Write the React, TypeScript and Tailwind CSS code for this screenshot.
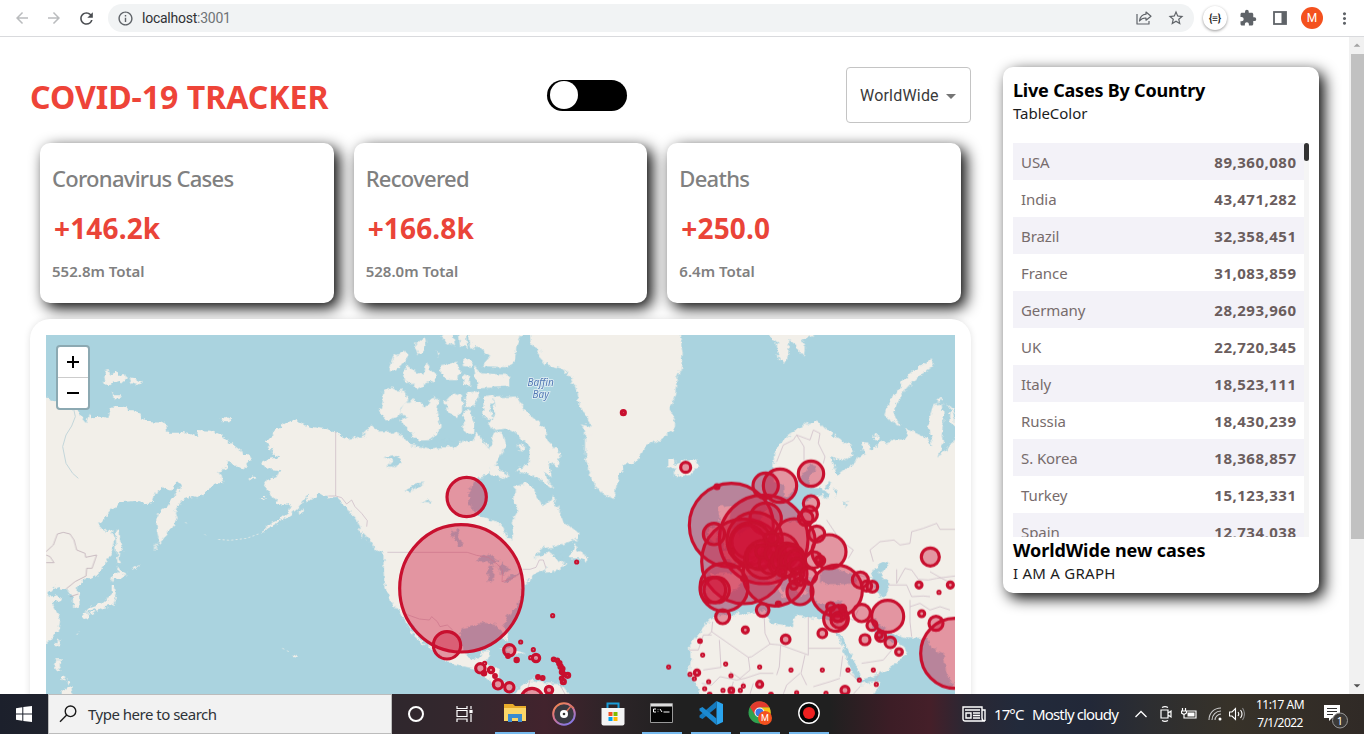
import React from "react";
import {
  MdArrowBack,
  MdArrowForward,
  MdRefresh,
  MdInfoOutline,
  MdStarBorder,
  MdExtension,
  MdMoreVert,
  MdArrowDropDown,
  MdArrowDropUp,
} from "react-icons/md";

const countries: [string, string][] = [
  ["USA", "89,360,080"],
  ["India", "43,471,282"],
  ["Brazil", "32,358,451"],
  ["France", "31,083,859"],
  ["Germany", "28,293,960"],
  ["UK", "22,720,345"],
  ["Italy", "18,523,111"],
  ["Russia", "18,430,239"],
  ["S. Korea", "18,368,857"],
  ["Turkey", "15,123,331"],
  ["Spain", "12,734,038"],
];

const stats = [
  { title: "Coronavirus Cases", value: "+146.2k", total: "552.8m Total" },
  { title: "Recovered", value: "+166.8k", total: "528.0m Total" },
  { title: "Deaths", value: "+250.0", total: "6.4m Total" },
];

const pacificLand = [
  "20,232 62,234 64,242 80,240 130,268 145,272 155,295 168,310 178,280 182,292 215,290 235,294 242,265 262,258 290,262 292,270 325,272 330,288 345,303 400,305 412,318 414,338 450,338 480,342 500,352 503,330 545,332 575,345 610,375 630,390 635,402 655,402 668,420 650,432 645,452 628,440 605,428 592,420 590,440 575,452 560,455 575,465 580,490 560,490 530,512 505,532 490,528 460,537 442,560 435,580 440,598 428,622 412,640 398,660 388,670 382,640 378,600 385,580 410,562 425,542 440,522 455,490 440,492 420,512 405,503 385,510 370,545 345,550 325,542 265,547 240,575 205,615 222,632 235,628 248,635 253,655 245,695 225,735 200,765 180,775 165,774 158,790 140,803 150,830 152,858 130,865 128,832 115,815 108,803 95,807 88,797 70,810 55,820 60,830 80,826 95,838 65,850 75,868 85,885 90,905 85,930 60,962 20,980",
  "220,175 226,152 238,150 245,165 258,152 268,165 280,162 287,178 275,188 262,180 240,196 225,192",
  "298,172 318,175 335,187 325,195 305,190",
  "246,214 252,214 250,226 266,226 273,240 252,238",
  "573,298 590,290 605,298 598,307 580,307",
  "262,630 269,628 270,660 279,695 268,697 266,714 273,730 262,728 260,690 257,645",
  "262,738 275,755 290,765 270,778 250,775 245,785 243,780 248,765 262,760",
  "245,795 257,798 260,820 250,855 225,860 205,872 190,868 168,880 176,865 205,855 215,852 235,835 245,815",
  "156,880 172,877 173,893 162,898",
  "180,876 196,872 192,880 180,884",
  "78,965 90,956 86,975 77,983",
  "76,1018 92,1018 93,1040 86,1050 95,1060 80,1052 72,1040",
  "95,1112 108,1108 124,1098 129,1140 95,1140",
  "95,1065 106,1070 102,1082 94,1076",
  "110,1078 120,1084 112,1096",
  "785,298 810,308 840,320 890,328 915,340 965,360 965,575 945,555 920,530 885,530 865,518 848,535 828,548 836,520 815,545 808,562 780,585 740,610 722,620 690,640 722,610 745,600 775,575 785,555 768,557 742,550 728,530 705,498 712,480 740,470 748,450 720,448 690,430 710,418 752,410 730,402 722,385 703,362 726,350 735,330 750,320",
  "806,575 820,562 822,570 810,584",
  "692,532 706,530 706,537",
  "655,470 678,474 676,480 660,476",
  "280,766 300,752 285,762",
  "300,750 335,733 318,746",
  "370,690 380,672 385,670 376,686",
  "787,1004 794,1001 800,1010 793,1014",
];

const americaLand = [
  "-5,332 20,340 55,358 90,348 108,330 130,320 150,338 190,335 215,345 240,375 285,380 315,372 340,382 385,380 400,360 425,368 440,340 465,372 480,385 495,335 518,340 525,380 510,405 498,430 480,445 475,462 450,470 430,490 415,520 415,555 435,575 465,592 520,615 525,640 545,665 550,640 545,605 565,570 552,550 555,500 585,490 610,503 620,530 640,558 655,545 668,530 685,568 700,605 745,638 745,655 720,665 680,678 640,685 610,712 635,708 660,690 676,695 670,715 690,728 705,725 690,745 660,757 645,758 650,745 625,755 600,775 580,800 575,830 555,865 530,890 522,915 537,945 533,966 520,945 510,930 498,912 460,908 430,916 392,925 388,960 400,990 420,1018 450,1015 455,995 478,992 475,1015 465,1028 480,1035 508,1046 506,1078 530,1090 555,1086 556,1105 530,1112 505,1103 480,1082 455,1062 430,1045 370,1034 330,1010 300,982 265,938 238,900 245,930 270,955 287,978 275,970 250,945 228,905 200,866 180,840 162,790 160,700 132,680 115,655 90,628 80,600 60,578 45,548 20,530 -5,532",
  "540,1150 570,1098 605,1078 640,1090 690,1092 740,1150",
  "600,10 605,75 630,90 625,108 645,130 690,145 722,170 740,210 750,260 772,290 782,320 765,330 765,400 775,450 790,490 815,520 850,538 862,490 880,438 920,425 950,375 990,360 1035,325 1035,300 1020,270 1035,225 1040,180 1052,150 1058,100 1045,10",
  "160,210 185,203 200,212 222,208 235,240 215,262 205,285 180,300 165,300 150,275 158,245",
  "208,280 225,250 250,238 285,262 300,240 315,228 326,245 320,275 332,320 318,345 298,360 270,362 250,350 235,330 210,300 235,292",
  "175,150 190,110 225,95 235,110 220,130 200,152",
  "218,160 230,140 255,155 280,165 290,125 300,150 318,160 315,180 290,190 262,205 245,190 222,180",
  "255,75 285,50 288,70 280,95 265,102",
  "318,90 328,108 322,112",
  "330,135 365,130 380,125 388,150 385,180 350,180 335,165",
  "400,118 425,125 420,140 402,138",
  "335,55 350,10 365,20 375,78 355,70",
  "385,10 405,10 412,80 390,78",
  "415,10 590,10 560,75 555,120 540,142 455,138 480,110 450,85 420,80",
  "432,135 455,160 540,165 540,200 445,205 438,180",
  "400,165 420,172 420,198 400,192",
  "345,245 370,218 396,225 396,270 380,295 355,275",
  "405,220 448,218 440,245 425,262 405,260",
  "402,272 418,270 435,310 432,340 400,335",
  "460,230 495,222 480,265 488,300 460,290",
  "490,232 560,230 578,262 605,290 645,325 650,355 692,400 685,440 655,425 665,470 640,455 668,505 635,480 600,465 555,450 595,435 600,380 565,345 530,325 500,330 470,315 495,290",
  "480,438 500,432 510,450 535,465 522,480 505,468 480,470",
  "563,375 585,378 580,392 566,390",
  "756,310 780,320 782,345 755,325",
  "738,668 742,690 768,705 768,725 745,715 718,715",
  "690,740 712,730 708,740",
  "130,672 160,685 172,705 145,692",
  "62,570 72,575 78,598",
  "85,628 98,632 96,655",
  "505,985 540,985 585,1000 555,1005 525,992",
  "590,1010 615,1005 630,1018 600,1022",
  "548,1022 568,1022 560,1030",
];

const eurasiaLand = [
  "380,10 395,58 410,68 415,110 432,132 445,95 448,60 470,75 475,100 492,105 495,72 480,62 520,45 520,10",
  "875,118 880,138 835,170 802,205 775,240 760,272 765,290 782,318 750,300 733,285 745,250 770,215 790,180 830,145",
  "85,418 100,418 105,432 118,430 140,418 165,418 175,440 155,462 130,472 100,462 112,448 85,438",
  "700,345 718,346 712,360 700,356",
  "400,440 402,405 415,372 450,342 500,310 535,305 555,325 590,350 635,380 640,405 620,420 590,415 570,408 580,440 595,465 610,452 645,425 650,412 672,405 664,366 688,368 690,392 720,370 765,360 805,350 792,322 830,340 860,355 880,378 870,340 865,300 880,255 908,250 912,300 905,345 910,370 895,410 925,385 945,350 980,350 980,1130 942,1105 918,1050 910,1000 875,985 862,955 800,952 745,940 702,898 690,905 704,935 720,960 750,965 780,968 802,1000 770,1032 720,1060 665,1080 655,1050 630,1000 604,950 592,935 588,905 600,860 608,842 560,850 532,850 512,805 528,775 498,780 500,812 480,832 466,800 440,762 402,752 412,782 442,822 432,836 400,792 352,762 312,772 292,802 262,832 235,852 200,842 195,800 210,762 280,760 290,732 240,695 262,688 302,642 352,612 380,560 395,600 472,608 488,590 498,545 550,520 540,502 512,502 508,470 530,435 512,432 475,480 456,520 432,535 430,492 402,482",
  "235,560 275,555 268,600 292,640 305,665 252,682 242,640",
  "205,625 235,620 230,662 200,665",
  "210,900 235,885 275,882 330,880 372,875 382,890 398,912 455,922 465,888 480,885 520,895 560,900 585,905 592,942 612,990 628,1040 658,1092 722,1085 718,1100 695,1150 195,1150 165,1085 148,1062 152,1020 150,975 185,930",
  "888,236 902,238 895,250",
  "918,250 932,270 928,305 945,320 945,300 935,262",
];

const lakes = [
  "540,762 552,738 575,742 600,752 640,762 655,788 620,792 570,792 540,788",
  "700,750 728,725 748,730 740,748 718,758 745,790 742,830 722,832 712,810 690,770",
  "560,480 572,490 568,505 556,502",
  "540,510 560,512 570,538 552,532",
  "582,510 594,508 590,530",
  "610,545 620,548 618,565",
];

const americaLakes = [
  "362,630 385,628 390,660 400,680 384,678 375,650 362,650",
  "438,722 470,700 505,722 485,732 465,724",
  "475,742 495,733 487,785 472,782",
  "500,738 520,728 540,750 515,765",
  "512,787 545,765 575,758 540,782",
  "160,412 195,405 215,428 195,442 172,438 190,422",
  "225,512 260,490 285,488 262,500 235,518",
  "275,548 302,540 298,550",
  "245,375 300,372 370,362 330,358 360,380 300,385",
  "82,352 110,338 108,348",
  "640,700 665,685 700,690 690,705 700,720 680,712 660,695",
];

const americaBorders =
  "M17,335 V528 L35,533 50,552 65,540 75,560 95,580 112,602 110,620 M172,697 H412 L440,706 475,712 505,735 518,752 516,785 545,776 568,762 M578,748 H600 L618,742 628,720 640,720 648,745 M232,884 L268,897 298,900 305,890 322,905 330,920 352,915 368,930 M600,1080 L590,1122 M690,1095 L705,1122 M-5,528 H17";

const asiaBorders =
  "M48,695 L70,675 82,642 100,637 120,642 132,660 140,690 165,700 167,712 200,705 186,745 170,745 168,768 M168,768 L135,785 108,807 M120,830 L145,822 M48,728 H72 L60,710 48,705";

const europeBorders =
  "M410,425 L430,375 460,360 470,345 492,380 492,420 M470,345 L510,360 520,330 540,340 535,370 555,410 550,430 M372,880 L375,940 390,972 335,1010 325,1012 215,935 205,945 M390,972 L422,975 505,1005 V890 M505,985 H602 M148,990 H175 L190,945 215,945 M238,960 L243,1042 190,1050 M325,1012 L330,1050 300,1075 270,1055 M422,975 L418,1040 410,1065 M495,1005 L483,1060 500,1095 M608,1008 L600,1070 M625,1055 L658,1085 M218,905 L215,935 M690,690 L720,665 762,660 780,675 810,670 815,635 850,625 890,610 900,628 945,628 M690,690 L700,725 M770,748 V790 L795,745 815,750 835,778 865,780 890,775 945,768 M745,795 L800,795 815,830 850,828 870,830 M870,755 L905,775 945,795 M810,905 L815,950 M810,860 L840,850 870,870 900,860 930,870 M560,600 L600,660 640,690 625,715 M640,760 L690,775 M655,870 L640,900 600,885 M720,1055 L705,1085 M755,990 L730,1020 665,1030 M185,1090 L215,1095 240,1070 290,1080 315,1075 360,1060 400,1060 M430,1122 L440,1095 480,1060 M520,1100 L570,1085 600,1075 M640,1122 L660,1100 M330,1122 L340,1090 M270,1122 L280,1085 M300,1122 L310,1085 M810,840 V905";

type C = [number, number, number, number?];

const americaCases: C[] = [
  [410, 531, 62],
  [394, 805, 188, 194],
  [351, 976, 44],
  [880, 278, 6],
  [740, 726, 3],
  [668, 887, 3],
  [572, 966, 3],
  [610, 989, 3],
  [538, 991, 20],
  [560, 1020, 5],
  [534, 1008, 4],
  [618, 1014, 14],
  [602, 1013, 3],
  [451, 1045, 17],
  [464, 1030, 3],
  [462, 1060, 5],
  [483, 1050, 11],
  [495, 1068, 4],
  [504, 1093, 17],
  [538, 1102, 17],
  [606, 1138, 36],
  [657, 1110, 14],
  [624, 1071, 4],
  [638, 1074, 4],
  [671, 1018, 4],
  [682, 1021, 4],
  [688, 1030, 5],
  [692, 1040, 5],
  [698, 1046, 4],
  [696, 1056, 5],
  [702, 1063, 4],
  [713, 1066, 6],
  [695, 1075, 4],
  [700, 1085, 6],
];

const worldCases: C[] = [
  [137, 442, 18],
  [231, 500, 6],
  [274, 616, 129],
  [371, 658, 136],
  [312, 724, 130],
  [405, 762, 99],
  [252, 802, 75],
  [222, 642, 35],
  [230, 810, 41],
  [219, 810, 41],
  [377, 497, 41],
  [420, 497, 53],
  [513, 461, 41],
  [377, 596, 50],
  [344, 660, 86],
  [325, 665, 52],
  [332, 670, 66],
  [463, 658, 65],
  [422, 695, 57],
  [513, 550, 26],
  [508, 583, 27],
  [497, 594, 25],
  [530, 642, 27],
  [567, 695, 54],
  [590, 812, 80],
  [480, 815, 42],
  [371, 718, 60],
  [358, 712, 40],
  [390, 728, 36],
  [366, 695, 22],
  [400, 700, 28],
  [410, 735, 26],
  [425, 722, 32],
  [440, 700, 34],
  [456, 695, 26],
  [455, 712, 40],
  [450, 735, 38],
  [440, 725, 20],
  [465, 720, 32],
  [470, 738, 26],
  [475, 760, 20],
  [466, 775, 20],
  [461, 796, 14],
  [480, 785, 14],
  [506, 768, 27],
  [521, 720, 28],
  [540, 722, 17],
  [535, 720, 8],
  [425, 755, 16],
  [395, 655, 22],
  [275, 694, 6],
  [310, 776, 5],
  [415, 852, 6],
  [661, 780, 27],
  [680, 798, 18],
  [697, 800, 19],
  [743, 889, 51],
  [665, 879, 29],
  [588, 897, 40],
  [597, 900, 27],
  [595, 880, 27],
  [572, 860, 15],
  [608, 865, 12],
  [592, 892, 16],
  [696, 916, 18],
  [722, 949, 18],
  [718, 945, 12],
  [751, 967, 19],
  [777, 996, 13],
  [675, 959, 18],
  [547, 940, 16],
  [437, 958, 16],
  [316, 930, 12],
  [368, 870, 22],
  [248, 890, 24],
  [180, 963, 4],
  [188, 1005, 3],
  [86, 1041, 3],
  [257, 1032, 3],
  [359, 1041, 3],
  [453, 1050, 3],
  [547, 1050, 3],
  [624, 1050, 3],
  [700, 1050, 3],
  [171, 1058, 8],
  [150, 1063, 3],
  [163, 1076, 3],
  [206, 1085, 3],
  [273, 1067, 3],
  [194, 1106, 3],
  [209, 1124, 4],
  [249, 1111, 3],
  [274, 1111, 7],
  [301, 1111, 3],
  [310, 1098, 3],
  [359, 1093, 12],
  [393, 1124, 4],
  [470, 1118, 3],
  [558, 1120, 3],
  [615, 1111, 15],
  [658, 1080, 3],
  [709, 1093, 3],
  [837, 795, 12],
  [931, 795, 12],
  [897, 817, 3],
  [845, 881, 12],
  [871, 711, 30],
  [888, 910, 24],
  [945, 1000, 106, 108],
];

const ringRadius = (r: number) => (r > 10 ? r - 3 : r);

function Circles({ items }: { items: C[] }) {
  return (
    <g fill="#cc1034" fillOpacity=".4" stroke="#c8102f" strokeWidth="9.5">
      {items.map(([x, y, rx, ry], i) => (
        <ellipse key={i} cx={x} cy={y} rx={ringRadius(rx)} ry={ringRadius(ry ?? rx)} />
      ))}
    </g>
  );
}

function Polys({ items }: { items: string[] }) {
  return (
    <>
      {items.map((p, i) => (
        <polygon key={i} points={p} />
      ))}
    </>
  );
}

function WorldMap() {
  return (
    <svg className="block h-[359px] w-[909px] bg-[#aad3df]" viewBox="0 0 2727 1077">
      <defs>
        <filter id="coast" filterUnits="userSpaceOnUse" x="-40" y="-40" width="2810" height="1160" colorInterpolationFilters="sRGB">
          <feTurbulence type="fractalNoise" baseFrequency="0.06" numOctaves="3" seed="4" />
          <feDisplacementMap in="SourceGraphic" scale="20" xChannelSelector="R" yChannelSelector="G" />
        </filter>
      </defs>
      <g filter="url(#coast)">
        <g fill="#f2efe9">
          <g transform="translate(-48 -45)">
            <Polys items={pacificLand} />
          </g>
          <g transform="translate(852 -45)">
            <Polys items={americaLand} />
          </g>
          <g transform="translate(1782 -45)">
            <Polys items={eurasiaLand} />
          </g>
        </g>
        <g fill="#aad3df">
          <g transform="translate(852 -45)">
            <Polys items={americaLakes} />
          </g>
          <g transform="translate(1782 -45)">
            <Polys items={lakes} />
          </g>
        </g>
      </g>
      <path
        transform="translate(-48 -45)"
        d="M130,262 L136,290 125,318 108,345 98,380 108,430 128,460 145,475"
        fill="none"
        stroke="#c3d6da"
        strokeWidth="3"
      />
      <g fill="none" stroke="#c9b5c3" strokeWidth="2">
        <path transform="translate(-48 -45)" d={asiaBorders} stroke="#b5a2ae" />
        <path transform="translate(852 -45)" d={americaBorders} />
        <path transform="translate(1782 -45)" d={europeBorders} />
      </g>
      <path
        transform="translate(-48 -45)"
        d="M685,642 L650,655 600,661 560,658 M524,643 l3,3 M466,606 l8,10 M757,985 l6,3 m8,4 l6,4 M140,945 l8,-12"
        fill="none"
        stroke="#e4ebe8"
        strokeWidth="3"
        strokeDasharray="6 7"
      />
      <g
        fontFamily="Noto Sans, Open Sans, sans-serif"
        fontStyle="italic"
        fontSize="30"
        fill="#5179b5"
        stroke="#e4f0f4"
        strokeWidth="5"
        paintOrder="stroke"
        textAnchor="middle"
      >
        <text x="1484" y="152">Baffin</text>
        <text x="1484" y="188">Bay</text>
      </g>
      <g transform="translate(852 -45)">
        <Circles items={americaCases} />
      </g>
      <g transform="translate(1782 -45)">
        <Circles items={worldCases} />
      </g>
    </svg>
  );
}

function BrowserBar() {
  return (
    <header className="flex h-[37px] shrink-0 items-center border-b border-[#d9dadd] bg-white font-[Roboto,sans-serif] text-[#5f6368]">
      <div className="flex h-full w-[108px] items-center gap-[14px] pl-[13px]">
        <MdArrowBack className="size-[18px] text-[#babcbe]" />
        <MdArrowForward className="size-[18px] text-[#babcbe]" />
        <MdRefresh className="size-[19px] text-[#4a4d51]" />
      </div>
      <div className="flex h-7 w-[1086px] items-center rounded-full bg-[#f1f3f4] pl-[9px] pr-[9px]">
        <MdInfoOutline className="size-[17px]" />
        <span className="ml-[8px] flex-1 text-[14px] tracking-[-0.25px] text-[#303134]">
          localhost<span className="text-[#6f7377]">:3001</span>
        </span>
        <svg className="mr-[15px] h-4 w-4" viewBox="0 0 16 16" fill="none" stroke="currentColor" strokeWidth="1.2" strokeLinejoin="round">
          <path d="M1 4v10h12v-3M10 2l5 4.2-5 4V8C6.500 7.800 5 9 3.500 11 4 7 6 4.600 10 4.200z" />
        </svg>
        <MdStarBorder className="size-[18px]" />
      </div>
      <div className="ml-[9px] flex size-6 items-center justify-center rounded-full bg-white text-[10px] font-bold tracking-[-0.2px] text-[#222] shadow-[0_1px_3px_#999]">
        {"{≡}"}
      </div>
      <MdExtension className="ml-[12px] size-[18px]" />
      <svg className="ml-[16px] size-[14px]" viewBox="0 0 14 14">
        <rect x="1" y="1" width="12" height="12" fill="none" stroke="currentColor" strokeWidth="1.800" />
        <rect x="8.500" y="1" width="4.500" height="12" fill="currentColor" />
      </svg>
      <div className="ml-[14px] flex size-[22px] items-center justify-center rounded-full bg-[#f4511e] text-[12px] text-white">M</div>
      <MdMoreVert className="ml-[12px] size-[19px]" />
    </header>
  );
}

function StatCard({ title, value, total }: { title: string; value: string; total: string }) {
  return (
    <div className="flex h-40 flex-1 flex-col rounded-[10px] bg-white pl-3 shadow-[5px_5px_15px_#000]">
      <h2 className="mt-5 text-[22px] font-medium leading-[30px] tracking-[-0.72px] text-[#808080]">{title}</h2>
      <p className="mt-[15px] pl-[2px] text-[28px] font-bold leading-10 tracking-[0.15px] text-[#ea4438]">{value}</p>
      <p className="mt-[12px] text-[15px] font-semibold leading-[22px] text-[#808080]">{total}</p>
    </div>
  );
}

function Taskbar() {
  return (
    <footer className="flex h-10 shrink-0 items-center bg-[linear-gradient(90deg,#1c202c_0px,#1f222c_48px,#2f272d_392px,#35272d_470px,#42232d_545px,#2b2427_620px,#202020_680px,#202020_830px,#3c1d26_890px,#451f29_930px,#2b2733_965px,#222a3b_1020px,#222838_1090px,#2d2e31_1150px,#373229_1230px,#302a26_1364px)] text-white">
      <div className="flex h-full w-12 items-center justify-center">
        <svg className="size-4" viewBox="0 0 16 16" fill="#fff">
          <path d="M0 2.200 6.300 1.200V7.500H0zM7.300 1 16 0v7.500H7.300zM0 8.500h6.300v6.300L0 13.800zM7.300 8.500H16V16L7.300 15z" />
        </svg>
      </div>
      <div className="flex h-full w-[344px] items-center border border-[#bcbcbc] bg-[#f2f2f2] pl-[10px] text-[#2e3338]">
        <svg className="h-[18px] w-[18px]" viewBox="0 0 18 18" fill="none" stroke="#1a1a1a" strokeWidth="1.400">
          <circle cx="11.500" cy="6.300" r="5.300" />
          <path d="M7.700 10.100 1 16.800" />
        </svg>
        <span className="ml-[11px] text-[15px] tracking-[-0.5px]">Type here to search</span>
      </div>
      <div className="flex h-full w-12 items-center justify-center">
        <div className="size-4 rounded-full border-2 border-white" />
      </div>
      <div className="flex h-full w-12 items-center justify-center">
        <svg className="h-4 w-[17px]" viewBox="0 0 17 16" fill="none" stroke="#fff" strokeWidth="1.200">
          <path d="M1 0v2.500h10V0M1 4.500h10v6H1zM1 16v-3h10v3M15 0v3M15 8v8" />
          <rect x="14" y="4.500" width="2" height="2" fill="#fff" />
        </svg>
      </div>
      <div className="mr-[2px] flex h-full w-[49px] items-center justify-center pl-[5px]">
        <div className="flex h-full w-10 items-center justify-center border-b-2 border-[#76b9ed]">
          <svg className="h-[20px] w-[22px]" viewBox="0 0 22 20">
            <path d="M0 1h9l2 2h11v15H0z" fill="#e9ac2b" />
            <path d="M0 5h22v13H0z" fill="#fbd668" />
            <path d="M4 19v-8h14v8h-4v-4H8v4z" fill="#3a8cd0" />
          </svg>
        </div>
      </div>
      <div className="flex h-full w-[49px] items-center justify-center">
        <svg className="size-6" viewBox="0 0 24 24">
          <defs>
            <linearGradient id="disc" x1="0" y1="0" x2=".6" y2="1">
              <stop offset="0" stopColor="#f58a45" />
              <stop offset=".5" stopColor="#d9748b" />
              <stop offset="1" stopColor="#8a78e0" />
            </linearGradient>
          </defs>
          <circle cx="12" cy="12" r="10.800" fill="#3a3941" stroke="url(#disc)" strokeWidth="2" />
          <path d="m14 10 5-6 3 2" stroke="#d8745e" strokeWidth="1.500" fill="none" />
          <circle cx="12" cy="12" r="4" fill="#fff" />
          <circle cx="12" cy="12" r="1.300" fill="#333" />
        </svg>
      </div>
      <div className="flex h-full w-[49px] items-center justify-center">
        <svg className="h-6 w-6" viewBox="0 0 24 24">
          <path d="M6.500 7V1.500h11V7" fill="none" stroke="#1a9bd7" strokeWidth="2" />
          <path d="M.5 6h23v15.500a2 2 0 0 1-2 2h-19a2 2 0 0 1-2-2z" fill="#f4f4f4" />
          <path d="M7.500 10h4v4h-4z" fill="#f25022" />
          <path d="M12.500 10h4v4h-4z" fill="#7fba00" />
          <path d="M7.500 15h4v4h-4z" fill="#00a4ef" />
          <path d="M12.500 15h4v4h-4z" fill="#ffb900" />
        </svg>
      </div>
      <div className="flex h-full w-[49px] items-center justify-center">
        <div className="flex h-full w-10 items-center justify-center border-b-2 border-[#76b9ed]">
          <svg className="h-5 w-[23px]" viewBox="0 0 23 20">
            <path d="M.5.5h22v19H.5z" fill="#050505" stroke="#999" />
            <path d="M1 1h21v2.500H1z" fill="#ddd" />
            <path d="M6 6H3.500v3H6M8 6.500v.6M8 8.500v.6M10 6l2 3M13.500 9h6" fill="none" stroke="#fff" />
          </svg>
        </div>
      </div>
      <div className="flex h-full w-[49px] items-center justify-center">
        <div className="flex h-full w-10 items-center justify-center border-b-2 border-[#76b9ed]">
          <svg className="size-6" viewBox="0 0 24 24">
            <path d="M17.500 0 24 3v18l-6.500 3z" fill="#2aa4ee" />
            <path d="M17.500 0v6.500L3.500 18 .5 16.500v-2z" fill="#1479bd" />
            <path d="M17.500 24v-6.500L3.500 6 .5 7.500v2z" fill="#1c8ad1" />
          </svg>
        </div>
      </div>
      <div className="flex h-full w-[49px] items-center justify-center">
        <div className="flex h-full w-10 items-center justify-center border-b-2 border-[#76b9ed]">
          <svg className="size-6" viewBox="0 0 24 24">
            <circle cx="11.500" cy="11.500" r="11" fill="#2fa24f" />
            <path d="M2 6A11 11 0 0 1 21.500 6.500H11.500L7 14z" fill="#e23b2e" />
            <path d="M11.500 6.500h10A11 11 0 0 1 12 22.500L16 14z" fill="#fbc116" />
            <circle cx="11.500" cy="11.500" r="5" fill="#fff" />
            <circle cx="11.500" cy="11.500" r="4" fill="#3b78e7" />
            <circle cx="17" cy="17" r="7" fill="#f4511e" />
            <text x="17" y="20" textAnchor="middle" fontSize="9" fontFamily="Roboto, sans-serif" fill="#fff">M</text>
          </svg>
        </div>
      </div>
      <div className="flex h-full w-[49px] items-center justify-center">
        <div className="flex h-full w-10 items-center justify-center border-b-2 border-[#76b9ed]">
          <svg className="size-[22px]" viewBox="0 0 22 22">
            <circle cx="11" cy="11" r="10.200" fill="#050505" stroke="#fff" strokeWidth="1.400" />
            <circle cx="11" cy="11" r="6" fill="#ee2020" />
          </svg>
        </div>
      </div>
      <div className="ml-auto flex h-full w-[402px] items-center">
        <svg className="h-4 w-6" viewBox="0 0 24 16" fill="none" stroke="#fff" strokeWidth="1.400">
          <path d="M1 1h19v11a3 3 0 0 0 3 3H3a2 2 0 0 1-2-2zM20 4h3v11M3 4h15M4 7h5v5H4zM11 7h7M11 9.500h7M11 12h7" />
        </svg>
        <span className="ml-2 w-[38px] whitespace-nowrap text-[15px] tracking-[-0.9px]">17°C</span>
        <span className="w-[103px] whitespace-nowrap text-[15px] tracking-[-0.85px]">Mostly cloudy</span>
        <svg className="h-2 w-3" viewBox="0 0 12 8" fill="none" stroke="#fff" strokeWidth="1.300">
          <path d="m.5 7 5.500-5.500L11.500 7" />
        </svg>
        <svg className="ml-[13px] h-4 w-3" viewBox="0 0 12 16" fill="none" stroke="#fff" strokeWidth="1.200">
          <path d="M2 1.500Q5-.2 8 1.500M2 14.500Q5 16.200 8 14.500M1 4h7v8H1zM8 7l3-2v6L8 9" />
        </svg>
        <svg className="ml-[9px] h-3 w-4" viewBox="0 0 16 12" fill="none" stroke="#fff" strokeWidth="1.200">
          <path d="M5.500 3H15v7H4M1.500 0v3M4.500 0v3M.5 3h5v2L3 6.500.5 5zM3 6v4h2" />
          <path d="M6.500 4.500h7v4h-7z" fill="#fff" stroke="none" />
        </svg>
        <svg className="ml-[11px] h-[14px] w-[14px]" viewBox="0 0 14 14" fill="none" stroke="#ccc" strokeWidth="1.100">
          <path d="M1 13C1 6 6 1 13 1M4 13c0-5 4-9 9-9M7 13c0-3 3-6 6-6" />
          <circle cx="12" cy="12" r="1.500" fill="#fff" stroke="none" />
        </svg>
        <svg className="ml-[7px] h-[14px] w-4" viewBox="0 0 16 14" fill="none" stroke="#fff" strokeWidth="1.100">
          <path d="M.5 5H3l3.500-3.500v11L3 9H.5zM9 5q1.500 2 0 4M11.500 3q3 4 0 8" />
          <path d="M13.500 1q4 6 0 12" stroke="#888" />
        </svg>
        <div className="ml-[7px] flex w-[56px] flex-col text-center text-[12px] leading-[18px] tracking-[-0.55px]">
          <span className="whitespace-nowrap">11:17 AM</span>
          <span>7/1/2022</span>
        </div>
        <svg className="ml-[16px] mt-[5px] h-6 w-6" viewBox="0 0 24 24">
          <path d="M0 0h16v13H8l-3 3v-3H0z" fill="#fff" />
          <path d="M3 3.500h10M3 6.500h10M3 9.500h6" stroke="#333" />
          <circle cx="16" cy="15.500" r="7.500" fill="#3c3a38" stroke="#999" />
          <text x="16" y="19.500" textAnchor="middle" fontSize="11" fontFamily="Noto Sans, sans-serif" fill="#fff">1</text>
        </svg>
      </div>
    </footer>
  );
}

export default function App() {
  return (
    <div className="flex h-[734px] w-[1364px] flex-col overflow-hidden bg-white font-['Noto_Sans','Open_Sans',sans-serif]">
      <BrowserBar />
      <div className="flex min-h-0 flex-1 overflow-hidden">
        <main className="flex min-w-0 flex-1 items-start pl-[30px] pt-[30px]">
          <section className="flex w-[941px] flex-col">
            <div className="flex h-14 items-center">
              <h1 className="mt-[4px] w-[517px] whitespace-nowrap text-[32px] font-bold tracking-normal text-[#ee4438]">COVID-19 TRACKER</h1>
              <div className="flex h-[31px] w-20 items-center rounded-full bg-black pl-[3px]">
                <div className="size-7 rounded-full bg-white" />
              </div>
              <div className="ml-auto flex h-14 w-[125px] items-center rounded border border-[#c4c4c4] pl-[13px] pt-px font-[Roboto,sans-serif] text-[16px] text-[#3a3a3a]">
                <span className="tracking-[0.2px]">WorldWide</span>
                <MdArrowDropDown className="size-6 text-[#757575]" />
              </div>
            </div>
            <div className="mx-[10px] mt-5 flex gap-5">
              {stats.map((s) => (
                <StatCard key={s.title} {...s} />
              ))}
            </div>
            <div className="relative mt-4 h-[500px] overflow-hidden rounded-[20px] bg-white p-4 shadow-[0_0_8px_-2px_rgba(0,0,0,0.2)]">
              <WorldMap />
              <div className="absolute left-[26px] top-[26px] flex w-[34px] flex-col overflow-hidden rounded border-2 border-[#8ca9b2] bg-white">
                <div className="flex h-[31px] items-center justify-center border-b border-[#ccc]">
                  <svg className="size-3" viewBox="0 0 12 12" stroke="#000" strokeWidth="2">
                    <path d="M0 6h12M6 0v12" />
                  </svg>
                </div>
                <div className="flex h-[30px] items-center justify-center">
                  <svg className="size-3" viewBox="0 0 12 12" stroke="#000" strokeWidth="2">
                    <path d="M0 6h12" />
                  </svg>
                </div>
              </div>
            </div>
          </section>
          <aside className="ml-8 flex h-[526px] w-[316px] flex-col rounded-[10px] bg-white p-[10px] shadow-[5px_5px_15px_#000]">
            <h3 className="mt-px text-[18px] font-bold leading-6 tracking-[-0.2px] text-black">Live Cases By Country</h3>
            <p className="-mt-px text-[15px] leading-6 tracking-[-0.05px] text-[#1c1c1c]">TableColor</p>
            <div className="mt-[18px] flex h-[394px] shrink-0 overflow-hidden">
              <div className="flex-1">
                {countries.map(([name, count], i) => (
                  <div key={name} className={`flex h-[37px] items-center justify-between px-2 pt-px text-[15px] text-[#6a5d5d] ${i % 2 === 0 ? "bg-[#f3f2f8]" : "bg-white"}`}>
                    <span className="tracking-[-0.08px] text-[#776c6c]">{name}</span>
                    <span className="-mr-[0.5px] font-bold tracking-[0.5px]">{count}</span>
                  </div>
                ))}
              </div>
              <div className="w-[5px] bg-[#f5f5f5]">
                <div className="h-[18px] w-[5px] rounded-full bg-[#333]" />
              </div>
            </div>
            <h3 className="mt-px text-[18px] font-bold leading-6 tracking-[-0.07px] text-black">WorldWide new cases</h3>
            <p className="-mt-px text-[15px] leading-6 tracking-[0.25px] text-[#1c1c1c]">I AM A GRAPH</p>
          </aside>
        </main>
        <div className="flex w-[15px] flex-col items-center bg-[#f1f1f1] pl-px">
          <MdArrowDropUp className="h-[17px] w-4 text-[#a3a3a3]" />
          <div className="h-[485px] w-[13px] bg-[#c1c1c1]" />
          <MdArrowDropDown className="mt-auto h-[17px] w-4 text-[#505050]" />
        </div>
      </div>
      <Taskbar />
    </div>
  );
}
